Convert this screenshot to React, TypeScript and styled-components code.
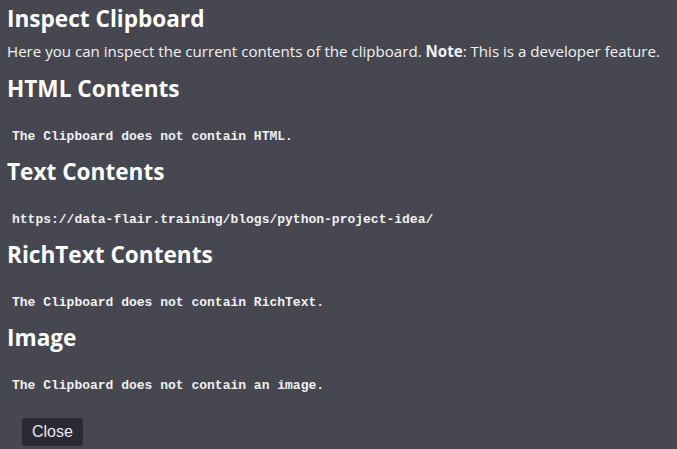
import styled, { createGlobalStyle } from "styled-components";

const GlobalStyle = createGlobalStyle`
  html, body {
    margin: 0;
    padding: 0;
    background: #474751;
  }
  body {
    font-family: "Open Sans", "Noto Sans", sans-serif;
    color: #ffffff;
  }
`;

const Page = styled.div`
  padding: 4px 7px 0;
  min-height: 449px;
  box-sizing: border-box;
`;

const Title = styled.h1`
  margin: 0;
  font-size: 22.6px;
  line-height: 30px;
  font-weight: 700;
`;

const Intro = styled.p`
  margin: 7px 0 0;
  font-size: 15.1px;
  line-height: 20px;
  color: #f2f2f4;
`;

const Section = styled.section`
  margin-top: 13px;

  & + & {
    margin-top: 6px;
  }
`;

const Heading = styled.h2`
  margin: 0;
  font-size: 22.6px;
  line-height: 30px;
  font-weight: 700;
`;

const Contents = styled.pre`
  margin: 19px 0 0;
  padding: 5px 5px;
  font-family: "Courier New", "Liberation Mono", monospace;
  font-size: 13px;
  font-weight: 700;
  line-height: 18px;
  color: #f0f0f2;
  white-space: pre-wrap;
`;

const Footer = styled.div`
  padding: 18px 15px 0;
`;

const CloseButton = styled.button`
  font-family: "Liberation Sans", Arial, sans-serif;
  font-size: 16px;
  color: #e8e8ec;
  background: #2a2a33;
  border: none;
  border-radius: 3px;
  padding: 0 10px;
  height: 28px;
  line-height: 28px;
`;

const sections = [
  { title: "HTML Contents", body: "The Clipboard does not contain HTML." },
  {
    title: "Text Contents",
    body: "https://data-flair.training/blogs/python-project-idea/",
  },
  { title: "RichText Contents", body: "The Clipboard does not contain RichText." },
  { title: "Image", body: "The Clipboard does not contain an image." },
];

export default function App() {
  return (
    <>
      <GlobalStyle />
      <Page>
        <Title>Inspect Clipboard</Title>
        <Intro>
          Here you can inspect the current contents of the clipboard.{" "}
          <strong>Note</strong>: This is a developer feature.
        </Intro>
        {sections.map((s) => (
          <Section key={s.title}>
            <Heading>{s.title}</Heading>
            <Contents>{s.body}</Contents>
          </Section>
        ))}
        <Footer>
          <CloseButton>Close</CloseButton>
        </Footer>
      </Page>
    </>
  );
}
